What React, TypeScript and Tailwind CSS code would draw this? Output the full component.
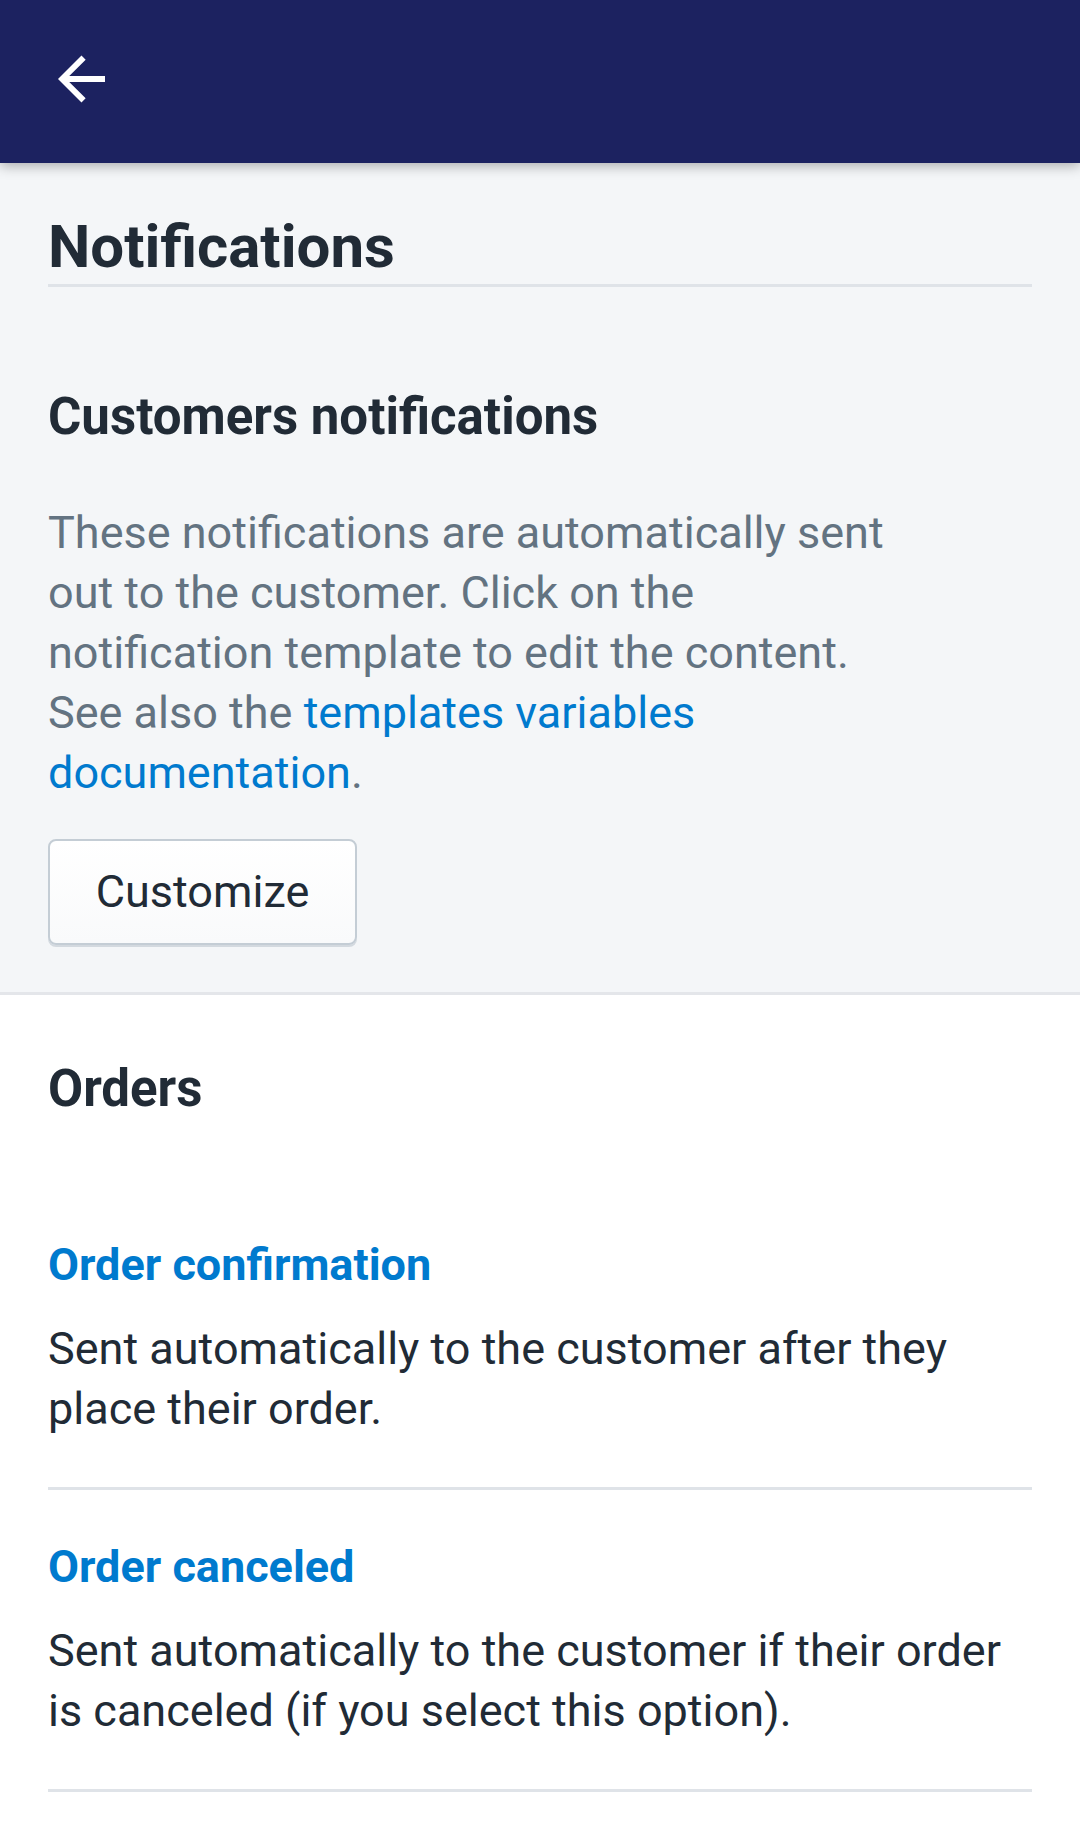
import React from "react";

const font = { fontFamily: "Roboto, 'Noto Sans', Arial, sans-serif" };

function Item({ title, desc }: { title: string; desc: string }) {
  return (
    <div className="pt-[51px] pb-[48px] border-b-[3px] border-[#dfe3e8]">
      <div className="text-[45px] leading-[52px] font-bold text-[#007ace]">{title}</div>
      <p className="mt-[28px] text-[45px] leading-[60px] text-[#212b36]">{desc}</p>
    </div>
  );
}

export default function App() {
  return (
    <div className="w-[1080px] min-h-[1843px] bg-white" style={font}>
      <header className="relative z-10 h-[163px] bg-[#1c2260] flex items-center pl-[58px] shadow-[0_3px_12px_rgba(0,0,0,0.3)]">
        <svg width="47" height="48" viewBox="4 4 16 16" fill="white" className="-mt-[5px]">
          <path d="M20 11H7.83l5.59-5.59L12 4l-8 8 8 8 1.41-1.41L7.83 13H20v-2z" />
        </svg>
      </header>
      <section className="bg-[#f4f6f8] px-[48px] pt-[50px] pb-[47px] border-b-[3px] border-[#e4e6ea]">
        <h1 className="text-[60px] leading-[68px] font-bold text-[#212b36] pb-[3px] border-b-[3px] border-[#dfe3e8]">
          Notifications
        </h1>
        <h2 className="mt-[100px] text-[51px] leading-[60px] font-bold text-[#212b36]">
          Customers notifications
        </h2>
        <p className="mt-[56px] max-w-[860px] text-[45px] leading-[60px] text-[#637381]">
          These notifications are automatically sent out to the customer. Click on the
          notification template to edit the content. See also the{" "}
          <span className="text-[#007ace]">templates variables documentation</span>.
        </p>
        <button className="mt-[36px] w-[309px] h-[106px] rounded-[8px] border-2 border-[#c4cdd5] bg-gradient-to-b from-white to-[#f9fafb] shadow-[0_2px_0_#d3d9df] text-[45px] text-[#212b36]">
          Customize
        </button>
      </section>
      <section className="bg-white px-[48px] pt-[64px]">
        <h2 className="text-[51px] leading-[60px] font-bold text-[#212b36] mb-[69px]">Orders</h2>
        <Item
          title="Order confirmation"
          desc="Sent automatically to the customer after they place their order."
        />
        <Item
          title="Order canceled"
          desc="Sent automatically to the customer if their order is canceled (if you select this option)."
        />
      </section>
    </div>
  );
}
